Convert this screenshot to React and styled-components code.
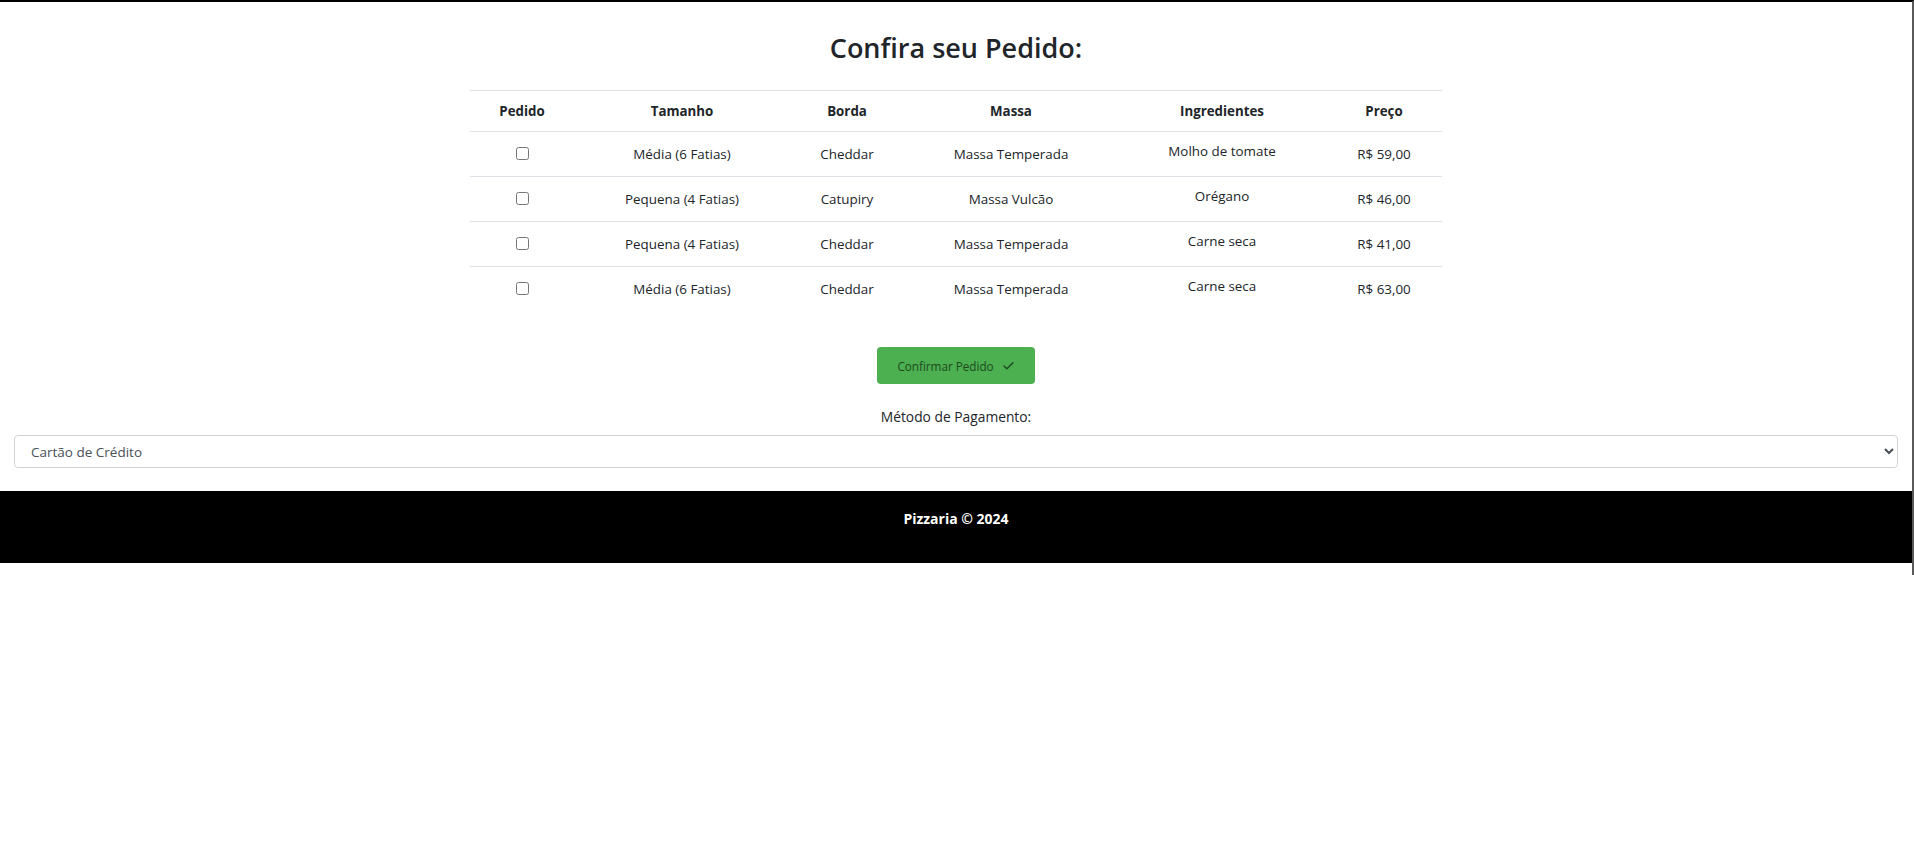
import React from "react";
import styled, { createGlobalStyle } from "styled-components";

const GlobalStyle = createGlobalStyle`
  body {
    margin: 0;
    background: #fff;
    font-family: "Open Sans", "Noto Sans", sans-serif;
    color: #212529;
  }
`;

const pedidos = [
  { tamanho: "Média (6 Fatias)", borda: "Cheddar", massa: "Massa Temperada", ingredientes: "Molho de tomate", preco: "R$ 59,00" },
  { tamanho: "Pequena (4 Fatias)", borda: "Catupiry", massa: "Massa Vulcão", ingredientes: "Orégano", preco: "R$ 46,00" },
  { tamanho: "Pequena (4 Fatias)", borda: "Cheddar", massa: "Massa Temperada", ingredientes: "Carne seca", preco: "R$ 41,00" },
  { tamanho: "Média (6 Fatias)", borda: "Cheddar", massa: "Massa Temperada", ingredientes: "Carne seca", preco: "R$ 63,00" },
];

const colunas = [
  { titulo: "Pedido", largura: 104 },
  { titulo: "Tamanho", largura: 216 },
  { titulo: "Borda", largura: 114 },
  { titulo: "Massa", largura: 214 },
  { titulo: "Ingredientes", largura: 208 },
  { titulo: "Preço", largura: 116 },
];

function CheckIcon() {
  return (
    <svg width="13" height="13" viewBox="0 0 16 16" fill="none" stroke="currentColor" strokeWidth="1.8" strokeLinecap="round" strokeLinejoin="round">
      <path d="M2.5 8.5l3.5 3.5 7.5-7.5" />
    </svg>
  );
}

function App() {
  return (
    <>
      <GlobalStyle />
      <Frame>
        <Title>Confira seu Pedido:</Title>

        <OrderTable>
          <colgroup>
            {colunas.map((c) => (
              <Col key={c.titulo} $w={c.largura} />
            ))}
          </colgroup>
          <thead>
            <tr>
              {colunas.map((c) => (
                <HeadCell key={c.titulo}>{c.titulo}</HeadCell>
              ))}
            </tr>
          </thead>
          <tbody>
            {pedidos.map((p, i) => (
              <Row key={i}>
                <Cell $lift={3}>
                  <Check type="checkbox" />
                </Cell>
                <Cell>{p.tamanho}</Cell>
                <Cell>{p.borda}</Cell>
                <Cell>{p.massa}</Cell>
                <Cell $lift={6}>{p.ingredientes}</Cell>
                <Cell>{p.preco}</Cell>
              </Row>
            ))}
          </tbody>
        </OrderTable>

        <ConfirmButton type="button">
          Confirmar Pedido
          <CheckIcon />
        </ConfirmButton>

        <PaymentLabel htmlFor="pagamento">Método de Pagamento:</PaymentLabel>
        <SelectWrap>
          <Select id="pagamento" defaultValue="credito">
            <option value="credito">Cartão de Crédito</option>
            <option value="debito">Cartão de Débito</option>
            <option value="pix">Pix</option>
            <option value="dinheiro">Dinheiro</option>
          </Select>
        </SelectWrap>

        <Footer>
          <FooterText>Pizzaria © 2024</FooterText>
        </Footer>
      </Frame>
    </>
  );
}

export default App;

const Frame = styled.div`
  width: 1912px;
  border-top: 2px solid #000;
  border-right: 2px solid #5a5a5a;
  padding-bottom: 12px;
  display: flex;
  flex-direction: column;
  align-items: center;
`;

const Title = styled.h2`
  margin: 27px 0 23px;
  font-size: 27px;
  line-height: 38px;
  font-weight: 600;
  color: #212529;
`;

const OrderTable = styled.table`
  width: 972px;
  table-layout: fixed;
  border-collapse: collapse;
  border-top: 1px solid #dee2e6;
  text-align: center;
`;

const Col = styled.col`
  width: ${(p) => p.$w}px;
`;

const HeadCell = styled.th`
  padding: 8px;
  font-size: 13.3px;
  line-height: 24px;
  font-weight: 700;
  color: #212529;
  border-bottom: 1px solid #dee2e6;
`;

const Row = styled.tr`
  border-bottom: 1px solid #dee2e6;

  &:last-child {
    border-bottom: 0;
  }
`;

const Cell = styled.td`
  padding: 8px 8px ${(p) => 8 + (p.$lift || 0)}px;
  font-size: 13.4px;
  line-height: 22px;
  color: #212529;
  vertical-align: middle;
`;

const Check = styled.input`
  margin: 0;
  width: 13px;
  height: 13px;
  vertical-align: middle;
`;

const ConfirmButton = styled.button`
  margin-top: 36px;
  height: 37px;
  width: 158px;
  display: flex;
  align-items: center;
  justify-content: center;
  gap: 8px;
  background: #4caf50;
  color: #1e4a20;
  border: 0;
  border-radius: 4px;
  font-family: "Open Sans", sans-serif;
  font-size: 11.7px;
  cursor: pointer;
`;

const PaymentLabel = styled.label`
  margin-top: 21px;
  font-size: 13.8px;
  line-height: 24px;
  color: #212529;
`;

const SelectWrap = styled.div`
  align-self: stretch;
  padding: 6px 14px 0;
`;

const Select = styled.select`
  width: 100%;
  height: 33px;
  padding: 0 36px 0 12px;
  border: 1px solid #ced4da;
  border-radius: 4px;
  background: #fff;
  color: #495057;
  font-family: "Open Sans", sans-serif;
  font-size: 13.5px;
`;

const Footer = styled.footer`
  align-self: stretch;
  margin-top: 23px;
  padding: 16px;
  background: #000;
  text-align: center;
`;

const FooterText = styled.p`
  margin: 0 0 16px;
  font-size: 14px;
  line-height: 24px;
  font-weight: 700;
  color: #fff;
`;
